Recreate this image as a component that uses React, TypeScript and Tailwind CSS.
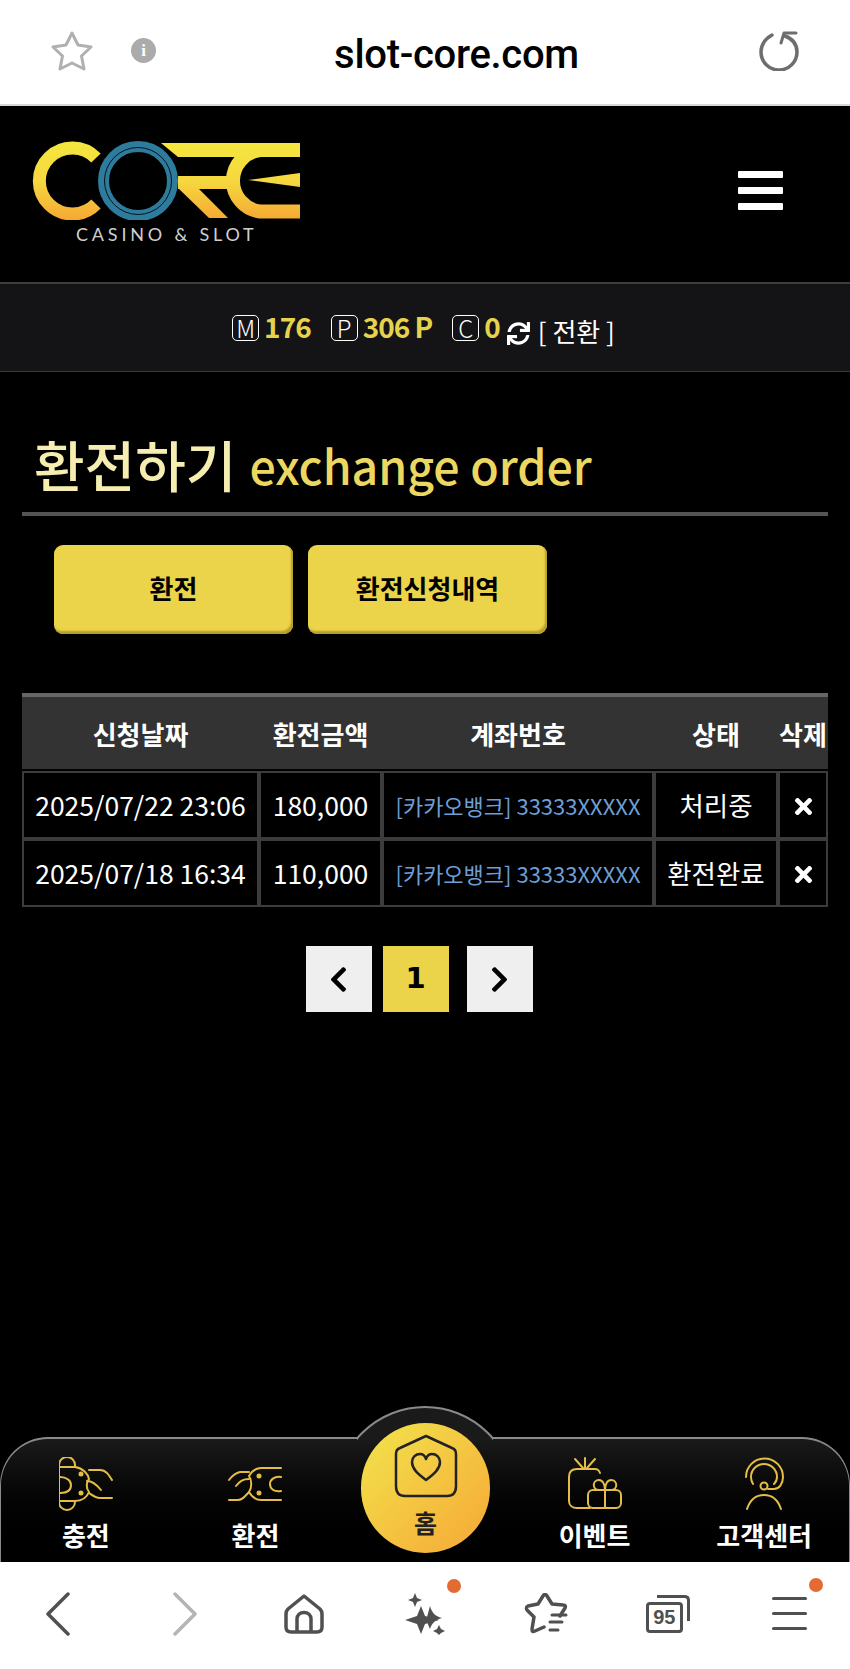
import { FaChevronLeft, FaChevronRight, FaSync, FaTimes } from 'react-icons/fa';

const rows = [
    { date: '2025/07/22 23:06', amount: '180,000', status: '처리중' },
    { date: '2025/07/18 16:34', amount: '110,000', status: '환전완료' },
];

const balances = [
    { key: 'M', value: '176', gap: 'ml-0' },
    { key: 'P', value: '306 P', gap: 'ml-[20px]' },
    { key: 'C', value: '0', gap: 'ml-[20px]' },
];

function Logo() {
    return (
        <svg width="270" height="80" viewBox="0 0 270 80" fill="none">
            <defs>
                <linearGradient id="logoGold" gradientUnits="userSpaceOnUse" x1="0" y1="2" x2="0" y2="80">
                    <stop offset="0" stopColor="#f4e63f" />
                    <stop offset="0.5" stopColor="#f6d83f" />
                    <stop offset="1" stopColor="#f5a833" />
                </linearGradient>
            </defs>
            <path d="M64 18A33 33 0 1 0 64 64" stroke="url(#logoGold)" strokeWidth="13" />
            <path d="M129 3H268V17H146Z" fill="url(#logoGold)" />
            <path d="M228 10A31 31 0 0 0 228 71.500H268" stroke="url(#logoGold)" strokeWidth="14" />
            <path d="M146 42.500H200" stroke="url(#logoGold)" strokeWidth="13" />
            <path d="M146 48L166 48L196 78H177Z" fill="url(#logoGold)" />
            <path d="M216 40L268 33V47Z" fill="url(#logoGold)" />
            <circle cx="106" cy="41" r="34.500" fill="#000" stroke="#2e7c9d" strokeWidth="11" />
            <circle cx="106" cy="41" r="33.500" stroke="#06141a" strokeWidth="1" />
        </svg>
    );
}

function ChargeIcon() {
    return (
        <svg width="54" height="54" viewBox="0 0 54 54" fill="none" stroke="#e3bd45" strokeWidth="2" strokeLinecap="round" strokeLinejoin="round">
            <path d="M16 9V8A8 8 0 0 0 0 8V45A8 8 0 0 0 16 45V44" />
            <path d="M0 10H16C24 11 29 17 30 22C27 25 27 31 30 35C28 40 23 44 16 44H0" />
            <path d="M1 20C8 20 12 24 12 28C12 33 8 36 1 36" />
            <path d="M30 13H41C47 13 50 18 53 23" />
            <path d="M28 24C33 24 38 28 42 33" />
            <path d="M30 36C33 38 36 41 41 41H53" />
            <circle cx="22" cy="17" r="1.500" fill="#e3bd45" />
            <circle cx="22" cy="36" r="1.500" fill="#e3bd45" />
        </svg>
    );
}

function ExchangeIcon() {
    return (
        <svg width="54" height="37" viewBox="0 0 54 37" fill="none" stroke="#e3bd45" strokeWidth="2" strokeLinecap="round" strokeLinejoin="round">
            <path d="M53 2H33C27 2 24 5 21 10C24 14 24 22 21 26C24 31 27 34 33 34H53" />
            <path d="M21 6H12C7 7 4 10 1 14" />
            <path d="M21 13C15 13 12 15 8 20" />
            <path d="M21 26C17 30 15 34 10 34H1" />
            <path d="M53 11C46 10 42 14 42 18C42 23 46 26 53 25" />
            <circle cx="31" cy="10" r="1.500" fill="#e3bd45" />
            <circle cx="31" cy="27" r="1.500" fill="#e3bd45" />
        </svg>
    );
}

function EventIcon() {
    return (
        <svg width="54" height="53" viewBox="0 0 54 53" fill="none" stroke="#e3bd45" strokeWidth="2" strokeLinecap="round" strokeLinejoin="round">
            <path d="M32 16C31 13 30 12 27 12H9C4 12 1 15 1 20V44C1 48 4 51 9 51H22" />
            <path d="M17 1V12M7 2L15 11M27 2L19 11" />
            <rect x="20" y="33" width="33" height="18" rx="5" />
            <path d="M37 33V51" />
            <path d="M37 33H31C24 33 24 23 31 23C35 23 37 28 37 33C37 28 39 23 43 23C50 23 50 33 43 33H37" />
        </svg>
    );
}

function SupportIcon() {
    return (
        <svg width="41" height="53" viewBox="0 0 41 53" fill="none" stroke="#e3bd45" strokeWidth="2" strokeLinecap="round" strokeLinejoin="round">
            <path d="M2 20A18.500 18.500 0 1 1 39 20C39 27 35 32 30 32H24" />
            <path d="M9 27C7 24 7 22 7 20A13 13 0 0 1 33 20C33 22 32 25 30 27" />
            <circle cx="20" cy="29" r="3.500" />
            <path d="M3 52C6 43 12 38 20 38C28 38 34 43 37 52" />
        </svg>
    );
}

function NavItem({ label, icon }: { label: string; icon: React.ReactNode }) {
    return (
        <div className="flex flex-col items-center">
            <div className="h-[61px] flex items-start justify-center">{icon}</div>
            <span className="text-[26px] leading-[34px] font-bold text-white whitespace-nowrap">{label}</span>
        </div>
    );
}

function BottomNav() {
    return (
        <div className="relative h-[125px] rounded-t-[48px] border border-b-0 border-[#8a8a8a] bg-gradient-to-b from-[#1a1a1a] to-black border-t-2">
            {/* bump behind the home button */}
            <div className="absolute left-[356px] top-[-33px] w-[136px] h-[35px] overflow-hidden">
                <div className="ml-[-22px] w-[180px] h-[180px] rounded-full border-2 border-[#8a8a8a] bg-[#1a1a1a]"></div>
            </div>
            <div className="grid grid-cols-5 h-full pt-[18px] relative">
                <NavItem label="충전" icon={<ChargeIcon />} />
                <NavItem label="환전" icon={<div className="pt-[9px]"><ExchangeIcon /></div>} />
                <div></div>
                <NavItem label="이벤트" icon={<EventIcon />} />
                <NavItem label="고객센터" icon={<SupportIcon />} />
            </div>
            <div className="absolute left-[360px] top-[-16px] w-[129px] h-[130px] rounded-full bg-gradient-to-br from-[#f1e44c] to-[#f5a736] flex flex-col items-center pt-[11px]">
                <svg width="64" height="64" viewBox="0 0 64 64" fill="none" stroke="#222" strokeWidth="2.500" strokeLinejoin="round">
                    <path d="M32 2L58 14C61 15 62 17 62 20V52C62 58 59 62 53 62H11C5 62 2 58 2 52V20C2 17 3 15 6 14Z" />
                    <path d="M32 46C24 40 18 35 18 28C18 23 22 20 26 20C29 20 31 22 32 25C33 22 35 20 38 20C42 20 46 23 46 28C46 35 40 40 32 46Z" />
                </svg>
                <span className="text-[25px] leading-[32px] font-bold text-[#222] mt-[8px]">홈</span>
            </div>
        </div>
    );
}

function BrowserBottom() {
    const gray = '#505050';
    return (
        <div className="h-[107px] bg-white grid grid-cols-7 pb-[4px] items-center justify-items-center">
            <svg className="mr-[5px]" width="24" height="44" viewBox="0 0 24 44" fill="none" stroke={gray} strokeWidth="3.500" strokeLinecap="round" strokeLinejoin="round">
                <path d="M22 2L2 22L22 42" />
            </svg>
            <svg className="ml-[5px]" width="24" height="44" viewBox="0 0 24 44" fill="none" stroke="#b4b4b4" strokeWidth="3.500" strokeLinecap="round" strokeLinejoin="round">
                <path d="M2 2L22 22L2 42" />
            </svg>
            <svg width="40" height="40" viewBox="0 0 40 40" fill="none" stroke={gray} strokeWidth="3.500" strokeLinejoin="round">
                <path d="M20 2L36 15C37.500 16.500 38 17.500 38 20V33C38 36.500 36.500 38 33 38H7C3.500 38 2 36.500 2 33V20C2 17.500 2.500 16.500 4 15Z" />
                <path d="M13 38V25C13 21 16 18.500 20 18.500C24 18.500 27 21 27 25V38" />
            </svg>
            <div className="relative w-[40px] h-[42px]">
                <svg width="40" height="42" viewBox="0 0 40 42" fill={gray}>
                    <path d="M10 0L12 5L17 7L12 9L10 14L8 9L3 7L8 5Z" />
                    <path d="M16 13L20 23L34 27L20 31L16 41L12 31L0 27L12 23Z" />
                    <path d="M25 13C27 20 30 23 37 25C30 27 27 30 25 36L22 29L28 27L22 24Z" />
                    <path d="M34 32L36 36L40 38L36 40L34 42L32 40L28 38L32 36Z" />
                </svg>
                <span className="absolute right-[-16px] top-[-14px] w-[14px] h-[14px] rounded-full bg-[#e36a32]"></span>
            </div>
            <svg width="44" height="41" viewBox="0 0 44 41" fill="none" stroke={gray} strokeWidth="3.500" strokeLinecap="round" strokeLinejoin="round">
                <path d="M36 23L41 15C42 13 41 12 39 12L28 11L23 3C22 1 20 1 19 3L14 11L4 13C2 14 2 15 3 17L10 24L8 36C8 39 9 39 11 38L20 34" />
                <path d="M28 22H42M26 29H38M26 37H34" strokeWidth="3" />
            </svg>
            <div className="relative w-[44px] h-[38px]">
                <div className="absolute left-0 bottom-0 w-[37px] h-[31px] rounded-[4px] border-[3px] border-[#505050] flex items-center justify-center">
                    <span className="font-['Liberation_Sans',sans-serif] font-bold text-[20px] leading-none text-[#505050]">95</span>
                </div>
                <div className="absolute right-0 top-0 w-[33px] h-[26px] rounded-tr-[5px] border-t-[3px] border-r-[3px] border-[#505050]"></div>
            </div>
            <div className="relative w-[35px] flex flex-col gap-[12px]">
                <span className="h-[3px] bg-[#505050] rounded-full"></span>
                <span className="h-[3px] bg-[#505050] rounded-full"></span>
                <span className="h-[3px] bg-[#505050] rounded-full"></span>
                <span className="absolute right-[-16px] top-[-19px] w-[14px] h-[14px] rounded-full bg-[#e36a32]"></span>
            </div>
        </div>
    );
}

export default function App() {
    return (
        <div className="w-[850px] h-[1669px] flex flex-col bg-black font-['Noto_Sans_CJK_KR',sans-serif] overflow-hidden">
            {/* browser address bar */}
            <div className="h-[106px] shrink-0 bg-white border-b-2 border-[#d8d8d8] flex items-center pl-[50px] pr-[51px] pb-[3px]">
                <svg width="44" height="42" viewBox="0 0 44 42" fill="none" stroke="#b0b0b0" strokeWidth="3" strokeLinejoin="round">
                    <path d="M22 3L28 15L41 17L31.500 26L34 39L22 33L10 39L12.500 26L3 17L16 15Z" />
                </svg>
                <div className="ml-[37px] w-[25px] h-[25px] rounded-full bg-[#ababab] flex items-center justify-center text-white text-[17px] font-bold font-['Liberation_Serif',serif]">i</div>
                <div className="flex-1 text-center text-[40px] leading-none font-medium tracking-[-0.3px] text-black font-['Roboto',sans-serif] pr-[2px] pt-[9px]">slot-core.com</div>
                <svg width="40" height="40" viewBox="0 0 40 40" fill="none" stroke="#6e6e6e" strokeWidth="3.500" strokeLinecap="round" strokeLinejoin="round">
                    <path d="M26 5C34 8 38 13 38 21A18 18 0 0 1 2 21C2 13 6 8 13 4" />
                    <path d="M25 2H37M25 2L22 12" strokeWidth="3" />
                </svg>
            </div>

            {/* site header */}
            <div className="h-[176px] shrink-0 flex items-start justify-between pl-[32px] pr-[67px] pt-[34px]">
                <div className="flex flex-col">
                    <Logo />
                    <span className="ml-[44px] mt-[2px] text-[18px] leading-[24px] tracking-[3.800px] text-[#cfcfcf] font-['Lato',sans-serif] whitespace-nowrap">CASINO &amp; SLOT</span>
                </div>
                <div className="mt-[31px] w-[45px] flex flex-col gap-[9px]">
                    <span className="h-[7px] rounded-[1px] bg-white"></span>
                    <span className="h-[7px] rounded-[1px] bg-white"></span>
                    <span className="h-[7px] rounded-[1px] bg-white"></span>
                </div>
            </div>

            {/* balance bar */}
            <div className="h-[90px] shrink-0 bg-[#141416] border-t-2 border-b border-t-[#3e3e3e] border-b-[#3a3a3a] flex items-center justify-center pr-[3px]">
                {balances.map((b) => (
                    <div key={b.key} className={`flex items-center gap-[5px] ${b.gap}`}>
                        <span className="w-[27px] h-[26px] rounded-[5px] border border-white text-white text-[24px] leading-none font-light flex items-center justify-center">{b.key}</span>
                        <span className="mb-[3px] text-[28px] leading-none font-bold tracking-[-1px] text-[#e6d24c]">{b.value}</span>
                    </div>
                ))}
                <FaSync className="ml-[7px] mt-[12px] text-white text-[23px]" />
                <span className="ml-[8px] mt-[6px] text-[26px] leading-none text-white whitespace-nowrap">[ 전환 ]</span>
            </div>

            {/* content */}
            <div className="flex-1 px-[22px]">
                <div className="h-[144px] flex items-end border-b-4 border-[#555] pl-[12px] pb-[16px] whitespace-nowrap">
                    <span className="text-[55px] leading-[66px] font-medium text-[#f6eeb0]">환전하기</span>
                    <span className="ml-[13px] text-[46.500px] leading-[62px] font-medium text-[#ecd860]">exchange order</span>
                </div>

                <div className="flex gap-[15px] pl-[32px] pt-[29px]">
                    <button className="w-[239px] h-[89px] pb-[4px] rounded-[9px] bg-[#ecd44a] shadow-[inset_-2px_-3px_2px_#b79c2f] text-[26px] font-bold text-black">환전</button>
                    <button className="w-[239px] h-[89px] pb-[4px] rounded-[9px] bg-[#ecd44a] shadow-[inset_-2px_-3px_2px_#b79c2f] text-[26px] font-bold text-black">환전신청내역</button>
                </div>

                <table className="mt-[59px] w-[806px] table-fixed border-separate border-spacing-0 text-white">
                    <colgroup>
                        <col className="w-[237px]" />
                        <col className="w-[123px]" />
                        <col className="w-[272px]" />
                        <col className="w-[124px]" />
                        <col className="w-[50px]" />
                    </colgroup>
                    <thead>
                        <tr className="h-[78px]">
                            {['신청날짜', '환전금액', '계좌번호', '상태', '삭제'].map((h) => (
                                <th key={h} className="bg-[#333] border-t-4 border-b-2 border-t-[#666] border-b-black text-[26px] font-bold whitespace-nowrap">{h}</th>
                            ))}
                        </tr>
                    </thead>
                    <tbody>
                        {rows.map((r) => (
                            <tr key={r.date} className="h-[68px] text-[26.500px] text-center">
                                <td className="border-2 border-[#3c3c3c] whitespace-nowrap">{r.date}</td>
                                <td className="border-2 border-[#3c3c3c] whitespace-nowrap">{r.amount}</td>
                                <td className="border-2 border-[#3c3c3c] whitespace-nowrap text-[22px] text-[#6d9fd6]">[카카오뱅크] 33333XXXXX</td>
                                <td className="border-2 border-[#3c3c3c] whitespace-nowrap">{r.status}</td>
                                <td className="border-2 border-[#3c3c3c]"><FaTimes className="mx-auto mt-[3px] text-[25px] text-white" /></td>
                            </tr>
                        ))}
                    </tbody>
                </table>

                <div className="mt-[39px] flex justify-center pr-[12px]">
                    <div className="w-[66px] h-[66px] bg-[#efefef] flex items-center justify-center"><FaChevronLeft className="text-[29px] text-black" /></div>
                    <div className="ml-[11px] w-[66px] h-[66px] bg-[#ecd44a] flex items-center justify-center text-[29px] font-bold text-black font-['DejaVu_Sans',sans-serif]">1</div>
                    <div className="ml-[18px] w-[66px] h-[66px] bg-[#efefef] flex items-center justify-center"><FaChevronRight className="text-[29px] text-black" /></div>
                </div>
            </div>

            <BottomNav />
            <BrowserBottom />
        </div>
    );
}
